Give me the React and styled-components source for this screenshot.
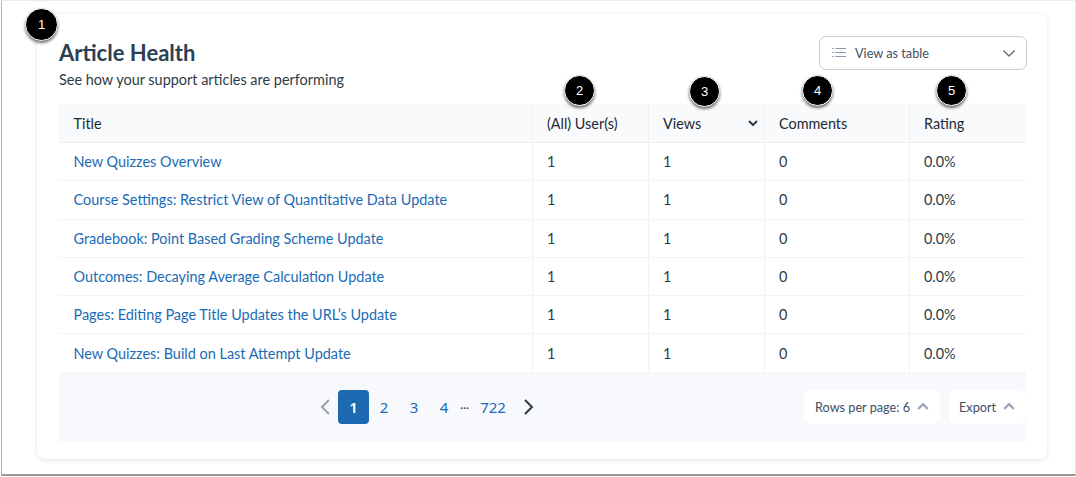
import React from "react";
import styled, { createGlobalStyle } from "styled-components";

const GlobalStyle = createGlobalStyle`
  html, body {
    margin: 0;
    padding: 0;
    background: #fff;
    font-family: "Lato", "Liberation Sans", sans-serif;
  }
`;

const columns = "473.5px 116px 116px 145px 116.5px";

const rows = [
  "New Quizzes Overview",
  "Course Settings: Restrict View of Quantitative Data Update",
  "Gradebook: Point Based Grading Scheme Update",
  "Outcomes: Decaying Average Calculation Update",
  "Pages: Editing Page Title Updates the URL’s Update",
  "New Quizzes: Build on Last Attempt Update",
];

const badges = [
  { n: 1, x: 40, y: 24, big: true },
  { n: 2, x: 578, y: 90 },
  { n: 3, x: 703, y: 91 },
  { n: 4, x: 816, y: 90 },
  { n: 5, x: 950, y: 90 },
];

const ListIcon = () => (
  <svg width="14" height="12" viewBox="0 0 14 12" fill="none" stroke="#8d99ad" strokeWidth="1.2">
    <path d="M0 1.5h1.6M0 5.5h1.6M0 9.5h1.6M3.4 1.5H14M3.4 5.5H14M3.4 9.5H14" />
  </svg>
);

const Chevron = ({ dir = "down", size = 10, color = "#394b58", width = 2 }) => (
  <svg width={size} height={size * 0.6} viewBox="0 0 10 6" fill="none" stroke={color} strokeWidth={width}>
    <path d={dir === "down" ? "M1 1l4 4 4-4" : "M1 5l4-4 4 4"} />
  </svg>
);

const Arrow = ({ dir, color }) => (
  <svg width="10" height="16" viewBox="0 0 10 16" fill="none" stroke={color} strokeWidth="2">
    <path d={dir === "left" ? "M9 1L2 8l7 7" : "M1 1l7 7-7 7"} />
  </svg>
);

const App = () => {
  return (
    <Page>
      <GlobalStyle />
      <Card>
        <Head>
          <div>
            <Title>Article Health</Title>
            <Subtitle>See how your support articles are performing</Subtitle>
          </div>
          <Select>
            <ListIcon />
            <SelectLabel>View as table</SelectLabel>
            <Chevron size={14} color="#5f6f7f" width={1} />
          </Select>
        </Head>
        <Table>
          <HeadRow>
            <HeadCell>Title</HeadCell>
            <HeadCell>(All) User(s)</HeadCell>
            <HeadCell>
              Views
              <SortIcon>
                <Chevron size={10} color="#2d3b45" />
              </SortIcon>
            </HeadCell>
            <HeadCell>Comments</HeadCell>
            <HeadCell $plain>Rating</HeadCell>
          </HeadRow>
          {rows.map((title) => (
            <Row key={title}>
              <Cell>
                <ArticleLink href="#">{title}</ArticleLink>
              </Cell>
              <Cell>1</Cell>
              <Cell>1</Cell>
              <Cell>0</Cell>
              <Cell $plain>0.0%</Cell>
            </Row>
          ))}
        </Table>
        <Footer>
          <Pager>
            <PagerArrow>
              <Arrow dir="left" color="#9aa3ab" />
            </PagerArrow>
            <PageNum $active>1</PageNum>
            <PageNum>2</PageNum>
            <PageNum>3</PageNum>
            <PageNum>4</PageNum>
            <Dots>...</Dots>
            <LastPage>722</LastPage>
            <PagerArrow>
              <Arrow dir="right" color="#2d3b45" />
            </PagerArrow>
          </Pager>
          <FooterActions>
            <RowsButton>
              Rows per page: 6
              <Chevron dir="up" size={12} color="#9aa7b5" />
            </RowsButton>
            <ExportButton>
              Export
              <Chevron dir="up" size={12} color="#9aa7b5" />
            </ExportButton>
          </FooterActions>
        </Footer>
      </Card>
      {badges.map((b) => (
        <Badge key={b.n} $big={b.big} style={{ left: b.x, top: b.y }}>
          {b.n}
        </Badge>
      ))}
    </Page>
  );
};

const Page = styled.div`
  position: relative;
  box-sizing: border-box;
  width: 1075px;
  height: 476px;
  margin-left: 1px;
  padding: 14px 0 0 35px;
  overflow: hidden;
  background: #fff;
  border-left: 1px solid #b4b4b4;
  border-right: 1px solid #e2e2e2;
  border-top: 1px solid #ececec;
  border-bottom: 2px solid #9a9a9a;
`;

const Card = styled.div`
  box-sizing: border-box;
  width: 1010px;
  height: 445px;
  margin-top: -1px;
  padding: 0 20px 0 22px;
  background: #fff;
  border-radius: 8px;
  box-shadow: 0 1px 5px rgba(45, 59, 69, 0.14);
`;

const Head = styled.div`
  display: flex;
  justify-content: space-between;
  height: 90px;
  padding-top: 22px;
  box-sizing: border-box;
`;

const Title = styled.h1`
  margin: 0;
  font-size: 22px;
  line-height: 34px;
  font-weight: 700;
  color: #2d3f53;
`;

const Subtitle = styled.p`
  margin: 0;
  font-size: 14.45px;
  line-height: 20px;
  color: #2d3b45;
`;

const Select = styled.div`
  box-sizing: border-box;
  display: flex;
  align-items: center;
  width: 208px;
  height: 34px;
  padding: 0 10px 0 12px;
  border: 1px solid #c7cdd1;
  border-radius: 7px;
  background: #fff;
`;

const SelectLabel = styled.span`
  flex: 1;
  margin-left: 9px;
  font-size: 12.7px;
  color: #3f4f5f;
`;

const Table = styled.div`
  width: 967px;
`;

const HeadRow = styled.div`
  display: grid;
  grid-template-columns: ${columns};
  height: 39px;
  background: #f9fafc;
  border-bottom: 1px solid #eceff1;
  box-sizing: border-box;
`;

const Row = styled.div`
  display: grid;
  grid-template-columns: ${columns};
  height: 38.3px;
  border-bottom: 1px solid #f3f4f6;
  box-sizing: border-box;
`;

const Cell = styled.div`
  display: flex;
  align-items: center;
  padding-left: 14.5px;
  font-size: 14.4px;
  color: #2d3b45;
  border-right: ${(p) => (p.$plain ? "none" : "1px solid #eff1f3")};
`;

const HeadCell = styled(Cell)`
  color: #1f2933;
`;

const SortIcon = styled.span`
  display: flex;
  margin-left: auto;
  margin-right: 6px;
`;

const ArticleLink = styled.a`
  color: #1a6bb5;
  text-decoration: none;
  font-size: 14.45px;
`;

const Footer = styled.div`
  display: flex;
  align-items: center;
  box-sizing: border-box;
  width: 967px;
  height: 69px;
  padding-bottom: 1px;
  background: #f8f9fc;
`;

const Pager = styled.div`
  display: flex;
  align-items: center;
  margin-left: 257px;
`;

const PagerArrow = styled.span`
  display: flex;
  justify-content: center;
  width: 17px;
  &:first-child {
    margin-right: 5px;
  }
`;

const PageNum = styled.span`
  display: flex;
  align-items: center;
  justify-content: center;
  width: ${(p) => (p.$active ? "31px" : "30px")};
  height: 34px;
  border-radius: 4px;
  font-family: "Noto Sans", sans-serif;
  font-size: 15px;
  color: ${(p) => (p.$active ? "#fff" : "#1a6bb5")};
  background: ${(p) => (p.$active ? "#1d6ab3" : "transparent")};
  font-weight: ${(p) => (p.$active ? 600 : 400)};
`;

const Dots = styled.span`
  width: 11px;
  margin-top: -5px;
  font-size: 13px;
  color: #2d3b45;
  text-align: center;
`;

const LastPage = styled(PageNum)`
  width: 40px;
  margin-left: 3px;
  margin-right: 7px;
`;

const FooterActions = styled.div`
  display: flex;
  gap: 9px;
  margin-left: auto;
`;

const FooterButton = styled.div`
  display: flex;
  align-items: center;
  gap: 7px;
  box-sizing: border-box;
  height: 34px;
  background: #fff;
  border-radius: 8px;
  font-size: 12.7px;
  color: #3d4f63;
`;

const RowsButton = styled(FooterButton)`
  width: 136px;
  padding-left: 11px;
`;

const ExportButton = styled(FooterButton)`
  width: 77px;
  padding-left: 10px;
`;

const Badge = styled.div`
  position: absolute;
  box-sizing: border-box;
  display: flex;
  align-items: center;
  justify-content: center;
  width: ${(p) => (p.$big ? "33px" : "31px")};
  height: ${(p) => (p.$big ? "33px" : "31px")};
  margin: ${(p) => (p.$big ? "-17px 0 0 -17px" : "-16px 0 0 -16px")};
  border-radius: 50%;
  background: #000;
  border: 1px solid #fff;
  box-shadow: 0 2px 3px rgba(0, 0, 0, 0.55);
  color: #fff;
  font-family: "Liberation Sans", sans-serif;
  font-size: 13px;
`;

export default App;
